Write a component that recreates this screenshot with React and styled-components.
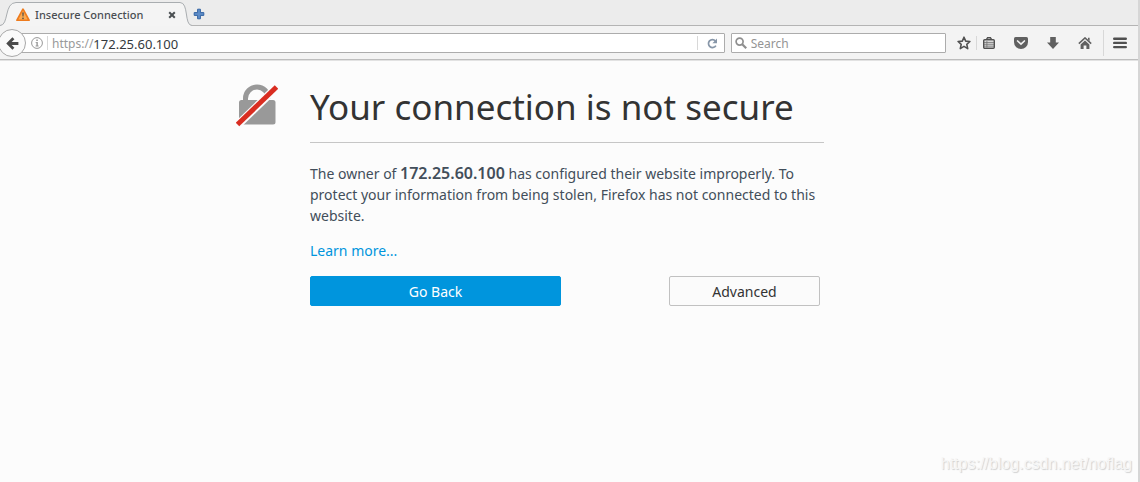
import styled, { createGlobalStyle } from "styled-components";

const GlobalStyle = createGlobalStyle`
  * {
    box-sizing: border-box;
  }

  body {
    margin: 0;
    background: #fcfcfc;
    font-family: "Noto Sans", "Open Sans", sans-serif;
  }

  button,
  input {
    font-family: inherit;
  }
`;

const Window = styled.div`
  position: relative;
  display: flex;
  flex-direction: column;
  min-height: 100vh;
  border-right: 2px solid #d6d6d6;
`;

const TabStrip = styled.div`
  display: flex;
  align-items: flex-end;
  height: 26px;
  background: #ececec;
  box-shadow: inset 0 -1px 0 #b4b4b4;
`;

const Tab = styled.div`
  display: flex;
  height: 24px;
`;

const TabEdge = styled.svg`
  display: block;
  width: ${({ $width }) => $width}px;
  height: 24px;
`;

const TabBody = styled.div`
  display: flex;
  align-items: center;
  width: 164px;
  padding-top: 1px;
  border-top: 1px solid #a9adb0;
  background: #f4f4f4;
`;

const TabTitle = styled.span`
  flex: 1;
  padding-left: 5px;
  font-size: 11px;
  font-weight: 500;
  line-height: 16px;
  white-space: nowrap;
  color: #4a4e52;
`;

const IconButton = styled.button`
  display: flex;
  align-items: center;
  justify-content: center;
  flex: none;
  width: ${({ $width }) => $width || 16}px;
  height: ${({ $height }) => $height || 20}px;
  padding: 0;
  border: none;
  background: transparent;
`;

const Toolbar = styled.div`
  display: flex;
  align-items: center;
  height: 34px;
  padding-top: 1px;
  background: #f3f3f3;
  border-bottom: 1px solid #bdbdbd;
  box-shadow: 0 1px 0 #e2e2e2;
`;

const BackButton = styled.button`
  position: relative;
  display: flex;
  align-items: center;
  justify-content: center;
  flex: none;
  width: 28px;
  height: 28px;
  margin: 0 -6px 0 -2px;
  padding: 0;
  border: 1px solid #a8a8a8;
  border-radius: 50%;
  background: #fafafa;
`;

const Field = styled.div`
  display: flex;
  align-items: center;
  flex: ${({ $grow }) => $grow} 1 0;
  min-width: 0;
  height: 20px;
  margin-right: 6px;
  padding-left: ${({ $indent }) => $indent}px;
  border: 1px solid #acacac;
  border-radius: 1px;
  background: #ffffff;
`;

const Divider = styled.span`
  flex: none;
  width: 1px;
  height: ${({ $height }) => $height || 14}px;
  margin: 0 4px;
  background: #d8d8d8;
`;

const Scheme = styled.label`
  padding-top: 1px;
  font-size: 12px;
  line-height: 17px;
  color: #9a9a9a;
`;

const FieldInput = styled.input`
  flex: 1;
  min-width: 0;
  height: 18px;
  padding: 1px 0 0;
  border: none;
  outline: none;
  background: transparent;
  font-size: ${({ $size }) => $size || 12}px;
  color: #33393d;

  &::placeholder {
    color: #949494;
    opacity: 1;
  }
`;

const SearchField = styled(Field)`
  gap: 4px;
`;

const Actions = styled.div`
  display: flex;
  align-items: center;
  flex: none;
  padding: 0 6px 0 4px;
`;

const ActionGroup = styled.div`
  display: flex;
  gap: 16px;
  padding-right: 6px;
`;

const Page = styled.main`
  display: flex;
  justify-content: center;
  gap: 32px;
  padding: 23px 78px 24px 0;
`;

const Content = styled.div`
  flex: 0 1 514px;
`;

const Title = styled.h1`
  margin: 0 0 20px;
  padding-bottom: 12px;
  border-bottom: 1px solid #c6c6c6;
  font-size: 35px;
  font-weight: 400;
  line-height: 47px;
  color: #333333;
`;

const Text = styled.p`
  margin: 0 0 14px;
  font-size: 14px;
  line-height: 21px;
  color: #424e5a;
`;

const Host = styled.b`
  font-size: 16px;
  font-weight: 600;
  line-height: 20px;
`;

const Link = styled.a`
  color: #0095dd;
  text-decoration: none;
`;

const Buttons = styled.div`
  display: flex;
  justify-content: space-between;
  padding: 1px 4px 0 0;
`;

const PageButton = styled.button`
  width: ${({ $primary }) => ($primary ? 251 : 151)}px;
  height: 30px;
  padding: 2px 0 0;
  border: 1px solid ${({ $primary }) => ($primary ? "#0095dd" : "#c1c1c1")};
  border-radius: 2px;
  background: ${({ $primary }) => ($primary ? "#0095dd" : "#fbfbfb")};
  color: ${({ $primary }) => ($primary ? "#ffffff" : "#333333")};
  font-size: 14px;
  line-height: 20px;
`;

const Watermark = styled.span`
  position: absolute;
  right: 6px;
  bottom: 8px;
  font-family: "Liberation Sans", sans-serif;
  font-size: 16px;
  line-height: 20px;
  color: #f6f6f6;
  text-shadow: 1px 1px 1px #d0d0d0;
`;

const WarningIcon = () => (
  <svg width="14" height="14" viewBox="0 0 14 14">
    <path d="M7 1.2 L13 12.2 H1 Z" fill="#f58220" stroke="#ee7b1d" strokeWidth="1.8" strokeLinejoin="round" />
    <path d="M7 2.6 L11.6 11.4 H2.4 Z" fill="#fbaa50" />
    <path d="M6.2 4.6 h1.6 l-.3 4 h-1 Z" fill="#5d5348" />
    <circle cx="7" cy="10.3" r=".9" fill="#5d5348" />
  </svg>
);

const CloseIcon = () => (
  <svg width="8" height="8" viewBox="0 0 8 8">
    <path d="M1.2 1.2 L6.8 6.8 M6.8 1.2 L1.2 6.8" stroke="#4a4f52" strokeWidth="2" />
  </svg>
);

const PlusIcon = () => (
  <svg width="12" height="12" viewBox="0 0 12 12">
    <path
      d="M4.6 1.2 h2.8 v3.4 H10.8 v2.8 H7.4 V10.8 h-2.8 V7.4 H1.2 v-2.8 h3.4 Z"
      fill="#5f8dc8"
      stroke="#3465a4"
      strokeLinejoin="round"
    />
  </svg>
);

const BackIcon = () => (
  <svg width="13" height="13" viewBox="0 0 13 13" fill="none" stroke="#4a4a4a" strokeWidth="2.8">
    <path d="M7.4 1.2 L2.2 6.5 L7.4 11.8 M2.6 6.5 H12.4" />
  </svg>
);

const InfoIcon = () => (
  <svg width="12" height="12" viewBox="0 0 12 12">
    <circle cx="6" cy="6" r="5.4" fill="none" stroke="#979797" />
    <path d="M5.3 2.6 h1.5 v1.5 H5.3 Z M4.6 5 h2.2 v3.6 h.8 v.8 H4.6 v-.8 h.8 V5.8 h-.8 Z" fill="#979797" />
  </svg>
);

const ReloadIcon = () => (
  <svg width="11" height="11" viewBox="0 0 11 11">
    <path d="M8.4 2.8 A4 4 0 1 0 8.9 7.6" fill="none" stroke="#8796a8" strokeWidth="1.7" />
    <path d="M10 .6 V5.2 H5.4 Z" fill="#8796a8" />
  </svg>
);

const SearchIcon = () => (
  <svg width="12" height="12" viewBox="0 0 12 12" fill="none" stroke="#8f8f8f">
    <circle cx="4.6" cy="4.6" r="3.5" strokeWidth="1.7" />
    <path d="M7.2 7.2 L11.2 11.2" strokeWidth="2.2" />
  </svg>
);

const StarIcon = () => (
  <svg width="14" height="14" viewBox="0 0 14 14">
    <path
      d="M7 1.2 L8.7 5.1 L12.9 5.5 L9.8 8.3 L10.7 12.6 L7 10.4 L3.3 12.6 L4.2 8.3 L1.1 5.5 L5.3 5.1 Z"
      fill="none"
      stroke="#505050"
      strokeWidth="1.6"
      strokeLinejoin="round"
    />
  </svg>
);

const LibraryIcon = () => (
  <svg width="12" height="12" viewBox="0 0 12 12">
    <rect x=".7" y="2.7" width="10.6" height="8.6" rx="1" fill="none" stroke="#505050" strokeWidth="1.4" />
    <path d="M3.4 2.6 L4.6 .7 H7.4 L8.6 2.6" fill="none" stroke="#505050" strokeWidth="1.4" />
    <path d="M1 5.3 H11 M1 7.2 H11 M1 9.1 H11" stroke="#606060" strokeWidth=".9" />
    <path d="M3.9 4 V10.6" stroke="#707070" strokeWidth=".8" />
  </svg>
);

const PocketIcon = () => (
  <svg width="14" height="12" viewBox="0 0 14 12">
    <path d="M1.6 0 H12.4 Q14 0 14 1.6 V5 A7 7 0 0 1 0 5 V1.6 Q0 0 1.6 0 Z" fill="#606060" />
    <path d="M3.6 4 L7 7.2 L10.4 4" fill="none" stroke="#f3f3f3" strokeWidth="1.7" strokeLinecap="round" />
  </svg>
);

const DownloadIcon = () => (
  <svg width="12" height="12" viewBox="0 0 12 12">
    <path d="M3.2 0 H8.8 V5.4 H12 L6 12 L0 5.4 H3.2 Z" fill="#606060" />
  </svg>
);

const HomeIcon = () => (
  <svg width="14" height="12" viewBox="0 0 14 12">
    <path d="M.8 6.6 L7 .9 L13.2 6.6" fill="none" stroke="#606060" strokeWidth="1.5" />
    <path d="M10 .8 H11.6 V4 L10 2.6 Z" fill="#606060" />
    <path d="M2.6 7.4 L7 3.4 L11.4 7.4 V12 H8.4 V8.4 H5.6 V12 H2.6 Z" fill="#606060" />
  </svg>
);

const MenuIcon = () => (
  <svg width="14" height="12" viewBox="0 0 14 12">
    <path d="M1.2 1.7 H12.8 M1.2 5.9 H12.8 M1.2 10.1 H12.8" stroke="#505050" strokeWidth="2.4" strokeLinecap="round" />
  </svg>
);

const BrokenLock = styled.svg`
  flex: none;
  width: 42px;
  height: 44px;
`;

const App = () => (
  <>
    <GlobalStyle />
    <Window>
      <TabStrip>
        <Tab>
          <TabEdge $width={16} viewBox="0 0 16 24">
            <path d="M0 24 V23.5 C9 23.5 4 .5 16 .5 V24 Z" fill="#f4f4f4" />
            <path d="M0 23.5 C9 23.5 4 .5 16 .5" fill="none" stroke="#a9adb0" />
          </TabEdge>
          <TabBody>
            <WarningIcon />
            <TabTitle>Insecure Connection</TabTitle>
            <IconButton aria-label="Close tab">
              <CloseIcon />
            </IconButton>
          </TabBody>
          <TabEdge $width={12} viewBox="0 0 12 24">
            <path d="M0 .5 C9 .5 4 23.5 12 23.5 V24 H0 Z" fill="#f4f4f4" />
            <path d="M0 .5 C9 .5 4 23.5 12 23.5" fill="none" stroke="#a9adb0" />
          </TabEdge>
        </Tab>
        <IconButton $width={14} $height={24} aria-label="Open a new tab">
          <PlusIcon />
        </IconButton>
      </TabStrip>

      <Toolbar>
        <BackButton aria-label="Go back one page">
          <BackIcon />
        </BackButton>
        <Field $grow={705} $indent={10}>
          <InfoIcon />
          <Divider />
          <Scheme htmlFor="address">https://</Scheme>
          <FieldInput id="address" $size={13} defaultValue="172.25.60.100" />
          <Divider />
          <IconButton $width={22} aria-label="Reload">
            <ReloadIcon />
          </IconButton>
        </Field>
        <SearchField $grow={214} $indent={3}>
          <SearchIcon />
          <FieldInput aria-label="Search" placeholder="Search" />
        </SearchField>
        <Actions>
          <IconButton aria-label="Bookmark this page">
            <StarIcon />
          </IconButton>
          <Divider />
          <ActionGroup>
            <IconButton aria-label="Show bookmarks">
              <LibraryIcon />
            </IconButton>
            <IconButton aria-label="Save to Pocket">
              <PocketIcon />
            </IconButton>
            <IconButton aria-label="Downloads">
              <DownloadIcon />
            </IconButton>
            <IconButton aria-label="Home">
              <HomeIcon />
            </IconButton>
          </ActionGroup>
          <Divider $height={26} />
          <IconButton $width={24} aria-label="Open menu">
            <MenuIcon />
          </IconButton>
        </Actions>
      </Toolbar>

      <Page>
        <BrokenLock viewBox="0 0 42 44">
          <path d="M9.5 20 V15.5 A11.5 11.5 0 0 1 32.5 15.5" fill="none" stroke="#999999" strokeWidth="5" />
          <rect x="3" y="17" width="36.5" height="24.5" rx="2.5" fill="#999999" />
          <path d="M0 43.5 L42 3" stroke="#fcfcfc" strokeWidth="8" />
          <path d="M1.5 41.5 L40.5 4" stroke="#d92d21" strokeWidth="5" />
        </BrokenLock>
        <Content>
          <Title>Your connection is not secure</Title>
          <Text>
            The owner of <Host>172.25.60.100</Host> has configured their website improperly. To protect your
            information from being stolen, Firefox has not connected to this website.
          </Text>
          <Text>
            <Link href="#learn-more">Learn more...</Link>
          </Text>
          <Buttons>
            <PageButton $primary>Go Back</PageButton>
            <PageButton>Advanced</PageButton>
          </Buttons>
        </Content>
      </Page>
      <Watermark>https://blog.csdn.net/noflag</Watermark>
    </Window>
  </>
);

export default App;
